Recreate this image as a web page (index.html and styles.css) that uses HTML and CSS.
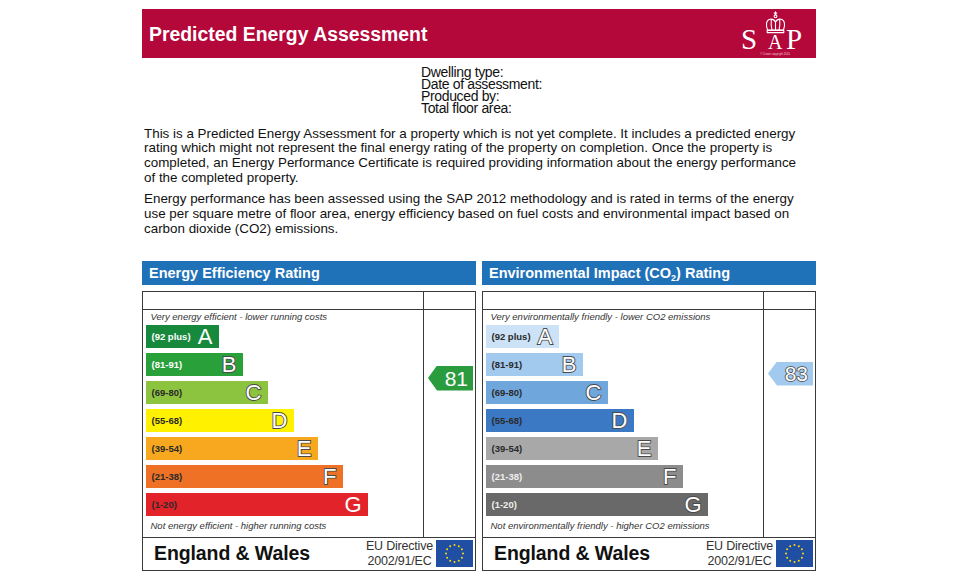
FILE: index.html
```html
<!DOCTYPE html>
<html lang="en">
<head>
<meta charset="utf-8">
<title>Predicted Energy Assessment</title>
<link rel="stylesheet" href="styles.css">
</head>
<body>
<div class="page">
  <header class="banner">
    <h1 class="banner-title">Predicted Energy Assessment</h1>
    <svg class="sap-logo" width="68" height="47" viewBox="0 0 68 47" aria-label="SAP">
      <g fill="none" stroke="#fff" stroke-width="1.1" stroke-linejoin="round" stroke-linecap="round">
        <path d="M35.5 0.8 V3.6 M34.2 2.1 H36.8"/>
        <circle cx="35.5" cy="5.3" r="1.4"/>
        <path d="M27.5 19 C25.5 13.5 26.3 8.8 30 8.2 C33 7.8 34.8 9.5 35.5 11 C36.2 9.5 38 7.8 41 8.2 C44.7 8.8 45.5 13.5 43.5 19 Z"/>
        <path d="M35.5 11 V19 M31.3 8.6 C30.8 12.5 31.3 16 32 19 M39.7 8.6 C40.2 12.5 39.7 16 39 19"/>
        <rect x="27.2" y="19.4" width="16.6" height="2.2"/>
      </g>
      <text x="1" y="38" class="sap-big">S</text>
      <text x="28" y="38" class="sap-small">A</text>
      <text x="46" y="38" class="sap-big">P</text>
      <text x="35" y="44" class="sap-tiny">© Crown copyright 2001</text>
    </svg>
  </header>

  <div class="dwelling">
    <div>Dwelling type:</div>
    <div>Date of assessment:</div>
    <div>Produced by:</div>
    <div>Total floor area:</div>
  </div>

  <p class="intro">This is a Predicted Energy Assessment for a property which is not yet complete. It includes a predicted energy rating which might not represent the final energy rating of the property on completion. Once the property is completed, an Energy Performance Certificate is required providing information about the energy performance of the completed property.</p>
  <p class="intro">Energy performance has been assessed using the SAP 2012 methodology and is rated in terms of the energy use per square metre of floor area, energy efficiency based on fuel costs and environmental impact based on carbon dioxide (CO2) emissions.</p>

  <div class="charts">
    <section class="chart chart-eer">
      <h2 class="chart-title">Energy Efficiency Rating</h2>
      <div class="grid">
        <div class="cell-head"></div>
        <div class="cell-head cell-side"></div>
        <div class="cell-main">
          <div class="caption">Very energy efficient - lower running costs</div>
          <div class="bands">
            <div class="band band-a" style="width:73px"><span class="range">(92 plus)</span><span class="letter plain">A</span></div>
            <div class="band band-b" style="width:97px"><span class="range">(81-91)</span><span class="letter">B</span></div>
            <div class="band band-c" style="width:122px"><span class="range">(69-80)</span><span class="letter">C</span></div>
            <div class="band band-d" style="width:148px"><span class="range">(55-68)</span><span class="letter">D</span></div>
            <div class="band band-e" style="width:172px"><span class="range">(39-54)</span><span class="letter">E</span></div>
            <div class="band band-f" style="width:197px"><span class="range">(21-38)</span><span class="letter">F</span></div>
            <div class="band band-g" style="width:222px"><span class="range">(1-20)</span><span class="letter plain">G</span></div>
          </div>
          <div class="caption caption-bottom">Not energy efficient - higher running costs</div>
        </div>
        <div class="cell-side cell-rating">
          <div class="pointer pointer-eer" style="top:56px">81</div>
        </div>
        <div class="cell-foot">
          <span class="region">England &amp; Wales</span>
          <div class="directive">
            <div class="directive-text">EU Directive<br>2002/91/EC</div>
            <svg class="eu-flag" width="37" height="27" viewBox="0 0 37 27" aria-label="EU flag">
              <rect width="37" height="27" fill="#1f4ea3"/>
              <g fill="#ffdd00">
                <circle cx="18.5" cy="5" r="1"/><circle cx="22.8" cy="6.2" r="1"/><circle cx="25.9" cy="9.3" r="1"/>
                <circle cx="27" cy="13.5" r="1"/><circle cx="25.9" cy="17.7" r="1"/><circle cx="22.8" cy="20.8" r="1"/>
                <circle cx="18.5" cy="22" r="1"/><circle cx="14.2" cy="20.8" r="1"/><circle cx="11.1" cy="17.7" r="1"/>
                <circle cx="10" cy="13.5" r="1"/><circle cx="11.1" cy="9.3" r="1"/><circle cx="14.2" cy="6.2" r="1"/>
              </g>
            </svg>
          </div>
        </div>
      </div>
    </section>

    <section class="chart chart-eir">
      <h2 class="chart-title">Environmental Impact (CO<sub>2</sub>) Rating</h2>
      <div class="grid">
        <div class="cell-head"></div>
        <div class="cell-head cell-side"></div>
        <div class="cell-main">
          <div class="caption">Very environmentally friendly - lower CO2 emissions</div>
          <div class="bands">
            <div class="band band-a" style="width:73px"><span class="range">(92 plus)</span><span class="letter">A</span></div>
            <div class="band band-b" style="width:97px"><span class="range">(81-91)</span><span class="letter">B</span></div>
            <div class="band band-c" style="width:122px"><span class="range">(69-80)</span><span class="letter">C</span></div>
            <div class="band band-d" style="width:148px"><span class="range">(55-68)</span><span class="letter">D</span></div>
            <div class="band band-e" style="width:172px"><span class="range">(39-54)</span><span class="letter">E</span></div>
            <div class="band band-f" style="width:197px"><span class="range">(21-38)</span><span class="letter">F</span></div>
            <div class="band band-g" style="width:222px"><span class="range">(1-20)</span><span class="letter">G</span></div>
          </div>
          <div class="caption caption-bottom">Not environmentally friendly - higher CO2 emissions</div>
        </div>
        <div class="cell-side cell-rating">
          <div class="pointer pointer-eir" style="top:52px">83</div>
        </div>
        <div class="cell-foot">
          <span class="region">England &amp; Wales</span>
          <div class="directive">
            <div class="directive-text">EU Directive<br>2002/91/EC</div>
            <svg class="eu-flag" width="37" height="27" viewBox="0 0 37 27" aria-label="EU flag">
              <rect width="37" height="27" fill="#1f4ea3"/>
              <g fill="#ffdd00">
                <circle cx="18.5" cy="5" r="1"/><circle cx="22.8" cy="6.2" r="1"/><circle cx="25.9" cy="9.3" r="1"/>
                <circle cx="27" cy="13.5" r="1"/><circle cx="25.9" cy="17.7" r="1"/><circle cx="22.8" cy="20.8" r="1"/>
                <circle cx="18.5" cy="22" r="1"/><circle cx="14.2" cy="20.8" r="1"/><circle cx="11.1" cy="17.7" r="1"/>
                <circle cx="10" cy="13.5" r="1"/><circle cx="11.1" cy="9.3" r="1"/><circle cx="14.2" cy="6.2" r="1"/>
              </g>
            </svg>
          </div>
        </div>
      </div>
    </section>
  </div>
</div>
</body>
</html>
```

FILE: styles.css
```css
* { box-sizing: border-box; }

html, body {
  margin: 0;
  padding: 0;
  background: #fff;
}

body {
  font-family: "Liberation Sans", Arial, sans-serif;
  color: #111;
}

.page {
  width: 674px;
  margin: 9px 0 0 142px;
}

/* ---------- banner ---------- */
.banner {
  height: 49px;
  background: #b4073a;
  display: flex;
  align-items: center;
  justify-content: space-between;
  padding: 0 8px 0 7px;
}

.banner-title {
  margin: 0;
  color: #fff;
  font-size: 19.4px;
  font-weight: bold;
  padding-top: 1px;
}

.sap-logo { display: block; margin-top: 1px; }

.sap-big {
  font-family: "Liberation Serif", "Times New Roman", serif;
  font-size: 29px;
  fill: #fff;
}

.sap-small {
  font-family: "Liberation Serif", "Times New Roman", serif;
  font-size: 20px;
  fill: #fff;
}

.sap-tiny {
  font-family: "Liberation Sans", Arial, sans-serif;
  font-size: 2.8px;
  fill: #f3c9d5;
  text-anchor: middle;
}

/* ---------- dwelling info ---------- */
.dwelling {
  margin-top: 8px;
  padding-left: 279px;
  font-size: 14px;
  line-height: 12px;
  letter-spacing: -0.35px;
  color: #111;
}

/* ---------- intro ---------- */
.intro {
  width: 654px;
  margin: 12.5px 0 0 2px;
  font-size: 13.4px;
  line-height: 14.8px;
  color: #111;
}

.intro + .intro { margin-top: 6.5px; }

/* ---------- charts ---------- */
.charts {
  margin-top: 24px;
  display: grid;
  grid-template-columns: 1fr 1fr;
  column-gap: 6px;
}

.chart-title {
  margin: 0;
  height: 24px;
  background: #1f71b8;
  color: #fff;
  font-size: 14.5px;
  font-weight: bold;
  line-height: 24px;
  padding-left: 7px;
}

.chart-title sub {
  font-size: 9px;
  vertical-align: -3px;
  line-height: 0;
}

.grid {
  margin-top: 6px;
  height: 280px;
  border: 1.5px solid #3a3a3a;
  display: grid;
  grid-template-columns: 1fr 52px;
  grid-template-rows: 18px 1fr 33px;
}

.cell-head {
  border-bottom: 1.5px solid #3a3a3a;
}

.cell-side {
  border-left: 1.5px solid #3a3a3a;
}

.cell-main {
  padding: 0 0 0 2.5px;
  display: flex;
  flex-direction: column;
}

.caption {
  font-size: 9.5px;
  font-style: italic;
  color: #333;
  line-height: 14px;
  padding-left: 5px;
}

.caption-bottom { margin-top: 3px; }

.bands {
  margin-top: 1.5px;
  display: flex;
  flex-direction: column;
  gap: 5px;
}

.band {
  height: 23px;
  display: flex;
  align-items: center;
  justify-content: space-between;
  padding: 0 6px 0 6px;
}

.range {
  font-size: 9.5px;
  font-weight: bold;
  color: #2a2a2a;
}

.letter {
  font-size: 22px;
  line-height: 1;
  color: #fff;
  -webkit-text-stroke: 1.8px #4a4a4a;
  paint-order: stroke fill;
}

.letter.plain { -webkit-text-stroke: 0; }

/* energy efficiency colours */
.chart-eer .band-a { background: #17893d; }
.chart-eer .band-b { background: #2aa03b; }
.chart-eer .band-c { background: #8dc43f; }
.chart-eer .band-d { background: #fff100; }
.chart-eer .band-e { background: #f7a81f; }
.chart-eer .band-f { background: #ee7125; }
.chart-eer .band-g { background: #e2232a; }
.chart-eer .band-a .range,
.chart-eer .band-b .range { color: #fff; }

/* environmental impact colours */
.chart-eir .band-a { background: #cce2f6; }
.chart-eir .band-b { background: #a2c9ee; }
.chart-eir .band-c { background: #6fa7dd; }
.chart-eir .band-d { background: #3b79c4; }
.chart-eir .band-e { background: #a8a8a8; }
.chart-eir .band-f { background: #8c8c8c; }
.chart-eir .band-g { background: #696969; }
.chart-eir .band-f .range,
.chart-eir .band-g .range { color: #eee; }

.cell-rating { position: relative; }

.pointer {
  position: absolute;
  right: 2px;
  width: 45px;
  height: 25px;
  clip-path: polygon(0 50%, 20% 0, 100% 0, 100% 100%, 20% 100%);
  color: #fff;
  font-size: 21px;
  line-height: 25px;
  text-align: right;
  padding-right: 5px;
}

.pointer-eer { background: #2a9c3d; }

.pointer-eir {
  background: #a2c9ee;
  height: 24px;
  line-height: 24px;
  -webkit-text-stroke: 1.6px #4a4a4a;
  paint-order: stroke fill;
}

.cell-foot {
  grid-column: 1 / span 2;
  border-top: 1.5px solid #3a3a3a;
  display: flex;
  align-items: center;
  justify-content: space-between;
  padding: 0 2px 0 11px;
}

.region {
  font-size: 19.5px;
  font-weight: bold;
  color: #111;
  letter-spacing: -0.1px;
}

.directive {
  display: flex;
  align-items: center;
  gap: 3px;
}

.directive-text {
  font-size: 12.5px;
  line-height: 15px;
  color: #333;
  text-align: center;
  letter-spacing: -0.2px;
}

.eu-flag { display: block; }
```
